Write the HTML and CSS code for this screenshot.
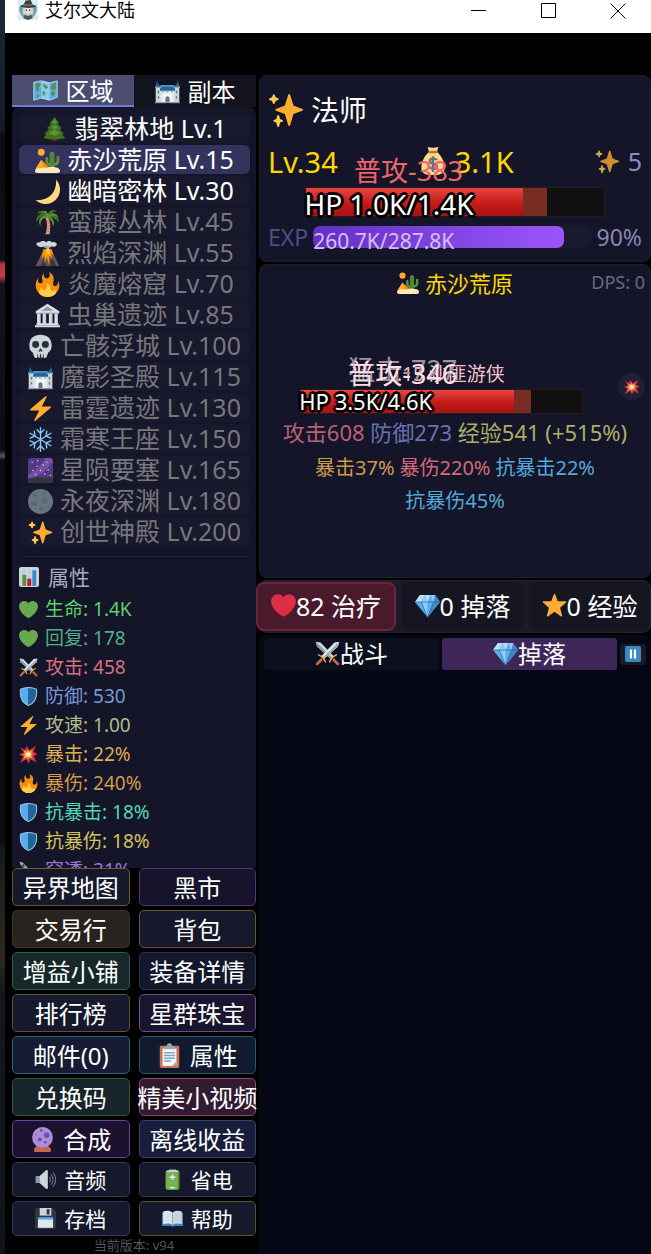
FILE: index.html
```html
<!DOCTYPE html>
<html lang="zh-CN">
<head>
    <meta charset="UTF-8">
    <meta name="viewport" content="width=device-width, initial-scale=1.0">
    <title>艾尔文大陆</title>
    <link rel="stylesheet" href="styles.css">
</head>
<body>
    <!-- icon sprite -->
    <svg class="sprite" aria-hidden="true">
        <symbol id="i-app" viewBox="0 0 36 36">
            <rect width="36" height="36" fill="#d9edf2"/>
            <path fill="#5f9fae" d="M2 13c5-6 27-6 32 0 0 11-5 18-16 22C7 31 2 24 2 13z"/>
            <path fill="#8aa1a8" d="M5 27l8-4h10l8 4-5 6-8 3-8-3z"/>
            <path fill="#cfd3d0" d="M9 12h18l1 12-5 5H13l-5-5z"/>
            <path fill="#f3ddcd" d="M12 14h12v6l-3 4h-6l-3-4z"/>
            <path fill="#36414a" d="M3 11c8 4 22 5 31 0l-8-3-3-8-9 1-4 7z"/>
            <path fill="#b58b44" d="M10 8l15 0 1 2-17 0z"/>
            <path fill="#27303a" d="M14 17h2v3h-2zM20 17h2v3h-2z"/>
            <path fill="#4d565d" d="M12 26l6 3 6-3 2 7-8 3-8-3z"/>
        </symbol>
        <symbol id="i-map" viewBox="0 0 36 36">
            <path fill="#5dadec" d="M1 6l11-2 12 3 11-3v24l-11 4-12-3-11 3z"/>
            <path fill="#8ccaf7" d="M12 4l12 3v25l-12-3z"/>
            <path fill="#5c913b" d="M3 9l6-2 2 3-3 3 1 4-3 3-2-5zM14 8l5 2 3 4-4 2-3-4zM27 9l6-2v8l-4 3-4-3zM26 21l4-2 2 4-5 4zM14 18l4 3-2 5-2-2zM5 24l4 1-3 4z"/>
            <path fill="none" stroke="#c6e5fa" d="M1 6l11-2 12 3 11-3v24l-11 4-12-3-11 3z"/>
        </symbol>
        <symbol id="i-castle" viewBox="0 0 36 36">
            <path fill="#ccd6dd" d="M1 12h8v22H1zM27 12h8v22h-8z"/>
            <path fill="#e1e8ed" d="M8 16h20v18H8z"/>
            <path fill="#226699" d="M0 12l2-6 1-5 1 5 5 6zM27 12l5-6 1-5 1 5 2 6zM8 9h20l1 8H7z"/>
            <path fill="#55acee" d="M8 9h20v2H8z"/>
            <path fill="#99aab5" d="M0 11h9v2H0zM27 11h9v2h-9zM10 17h3v2h-3zM16 17h3v2h-3zM23 17h3v2h-3z"/>
            <path fill="#f5f8fa" d="M12 21h12v13H12z"/>
            <path fill="#66757f" d="M15 34v-6c0-4 6-4 6 0v6zM4 17h2v4H4zM30 17h2v4h-2zM4 25h2v3H4zM30 25h2v3h-2z"/>
            <path fill="#8899a6" d="M0 33h15v2H0zM21 33h15v2H21z"/>
        </symbol>
        <symbol id="i-pine" viewBox="0 0 36 36">
            <path fill="#662113" d="M14 28h8v7h-8z"/>
            <path fill="#3e721d" d="M18 0c-2 3-4 6-7 8l2 1c-1 3-3 5-6 7l3 1c-2 3-4 5-7 7l3 1c-1 2-3 4-4 5 8 3 24 3 32 0-2-1-4-3-5-5l3-1c-3-2-5-4-6-7l3-1c-3-2-5-4-6-7l2-1c-3-2-5-5-7-8z"/>
            <path fill="#5c913b" d="M18 2l-4 6 4 2 4-2zM13 15l5 3 6-3-6-4zM9 23l9 4 9-4-9-5z"/>
        </symbol>
        <symbol id="i-desert" viewBox="0 0 36 36">
            <circle cx="9" cy="6" r="5" fill="#ffac33"/>
            <path fill="#f4900c" d="M1 30l8-13 14 13z"/>
            <path fill="#ffac33" d="M1 30l8-13 4 13z"/>
            <path fill="#5c913b" d="M21 30V9c0-5 7-5 7 0v21z"/>
            <path fill="none" stroke="#5c913b" stroke-width="4" stroke-linecap="round" d="M17 15v5q0 4 5 4M33 13v6q0 4-6 5"/>
            <path stroke="#3e721d" d="M23 8v21M26 8v21"/>
            <path fill="#ffe8b6" d="M0 33c0-3 4-5 9-4 5-2 8 0 10-1 5-2 9 0 11 0 4 0 6 3 6 5 0 3-4 3-8 3H7c-4 0-7 0-7-3z"/>
        </symbol>
        <symbol id="i-moon" viewBox="0 0 36 36">
            <path fill="#ffd983" d="M30.312.776C32 19 20 32 .776 30.312c8.199 7.717 21.091 7.588 29.107-.429C37.9 21.867 38.03 8.975 30.312.776z"/>
            <path fill="#ffcc4d" d="M30 15l2-2v4zM25 27l4-2-2 4zM17 31l4-1-2 3z"/>
        </symbol>
        <symbol id="i-palm" viewBox="0 0 36 36">
            <path fill="#d99e82" d="M18 9c4 6 5 15 3 26h-6c3-10 3-17 0-24z"/>
            <path fill="none" stroke="#c1694f" d="M17 15h4M18 19h4M17 23h5M17 27h5M16 31h5"/>
            <path fill="#3e721d" d="M18 11C12 7 5 9 2 19c-1-8 2-13 8-13-2-2-5-1-7 0 3-6 10-7 15 1 2-6 8-9 13-5-4 0-6 1-8 4 6-1 12 4 11 12-4-5-9-8-16-7z"/>
            <path fill="#5c913b" d="M18 11C11 11 7 15 8 24 3 16 7 8 16 8 15 3 11 2 9 3c4-4 9-2 10 4 5-4 12-3 15 4-5-4-10-3-13-1 6 2 8 8 5 14-1-7-3-10-8-13z"/>
        </symbol>
        <symbol id="i-volcano" viewBox="0 0 36 36">
            <path fill="#66565a" d="M1 36L13 11h10l12 25z"/>
            <path fill="#413438" d="M8 36l6-14 2 14zM22 36l1-14 8 14z"/>
            <path fill="#f4900c" d="M12 12h12l3 9-3-3 1 9-4-7-1 15-3-12-3 9-1-11-4 5z"/>
            <path fill="#ffcc4d" d="M17 8h3l2 14-4-6-3 8z"/>
            <path fill="#ccd6dd" d="M4 7C0 5 3 1 7 2c3-3 7-2 9 0 3-3 7-2 8 0 4-2 9 1 7 4-2 3-6 2-8 2-3 2-7 2-10 0-4 2-7 1-9-1z"/>
            <path fill="#99aab5" d="M9 7c3 2 5 1 8-1 2 2 5 3 9 1-3 4-6 2-9 3-4 0-6-1-8-3z"/>
        </symbol>
        <symbol id="i-fire" viewBox="0 0 36 36">
            <path fill="#f4900c" d="M35 19c0-2.062-.367-4.039-1.04-5.868-.46 5.389-3.333 8.157-6.335 6.868-2.812-1.208-.917-5.917-.777-8.164.236-3.809-.012-8.169-6.931-11.794 2.875 5.5.333 8.917-2.333 9.125-2.958.231-5.667-2.542-4.667-7.042-3.238 2.386-3.332 6.402-2.333 9 1.042 2.708-.042 4.958-2.583 5.208-2.84.28-4.418-3.041-2.963-8.333C2.52 10.965 1 14.805 1 19c0 9.389 7.611 17 17 17s17-7.611 17-17z"/>
            <path fill="#ffcc4d" d="M28.394 23.999c.148 3.084-2.561 4.293-4.019 3.709-2.106-.843-1.541-2.291-2.083-5.291s-2.625-5.083-5.708-6c2.25 6.333-1.247 8.667-3.08 9.084-1.872.426-3.753-.001-3.968-4.007C7.352 23.668 6 26.676 6 30c0 .368.023.73.055 1.09C9.125 34.124 13.342 36 18 36s8.875-1.876 11.945-4.91c.032-.36.055-.722.055-1.09 0-2.187-.584-4.236-1.606-6.001z"/>
        </symbol>
        <symbol id="i-temple" viewBox="0 0 36 36">
            <path fill="#d8e0e5" d="M1 12L18 1l17 11v3H1z"/>
            <path fill="#8899a6" d="M9 11l9-6 9 6zM3 14h30v1H3z"/>
            <path fill="#d8e0e5" d="M3 15h5v15H3zM11 15h5v15h-5zM20 15h5v15h-5zM28 15h5v15h-5zM2 29h32v3H2zM0 32h36v3H0z"/>
            <path fill="#99aab5" d="M7 15h1v14H7zM15 15h1v14h-1zM24 15h1v14h-1zM32 15h1v14h-1zM1 32h34v1H1z"/>
        </symbol>
        <symbol id="i-skull" viewBox="0 0 36 36">
            <path fill="#ccd6dd" d="M34 16C34 6 27 1 18 1S2 6 2 16c0 6 1 8 4 10 2 1 2 7 4 8 2 2 4-1 5-1 1 2 5 2 6 0 1 0 3 3 5 1 2-1 2-7 4-8 3-2 4-4 4-10z"/>
            <circle cx="11" cy="15" r="5" fill="#292f33"/>
            <circle cx="25" cy="15" r="5" fill="#292f33"/>
            <path fill="#292f33" d="M18 20l-3 5c1 1 2 0 3-1 1 1 2 2 3 1zM13 29h1v6h-1zM17 29h2v6h-2zM22 29h1v6h-1z"/>
        </symbol>
        <symbol id="i-zap" viewBox="0 0 36 36">
            <path fill="#ffac33" d="M32.938 15.651C32.792 15.26 32.418 15 32 15H19.925L26.89 1.458c.219-.426.106-.947-.271-1.243C26.437.071 26.218 0 26 0c-.233 0-.466.082-.653.243L18 6.588 3.347 19.243c-.316.273-.43.714-.284 1.105S3.582 21 4 21h12.075L9.11 34.542c-.219.426-.106.947.271 1.243.182.144.401.215.619.215.233 0 .466-.082.653-.243L18 29.412l14.653-12.655c.317-.273.43-.714.285-1.106z"/>
        </symbol>
        <symbol id="i-snow" viewBox="0 0 36 36">
            <g fill="none" stroke="#88c9f9" stroke-width="2" stroke-linecap="round">
                <path d="M18 1v34M3 9l30 18M33 9L3 27"/>
                <path d="M13 4l5 5 5-5M13 32l5-5 5 5M3 16l7-3-1-7M33 20l-7 3 1 7M33 16l-7-3 1-7M3 20l7 3-1 7"/>
            </g>
        </symbol>
        <symbol id="i-galaxy" viewBox="0 0 36 36">
            <rect width="36" height="36" rx="4" fill="#553986"/>
            <path fill="#7450a8" d="M0 24C10 20 20 10 25 0h8L36 4C28 18 14 28 0 30z"/>
            <path fill="#31373d" d="M0 30c10-3 24-3 36-1v3a4 4 0 0 1-4 4H4a4 4 0 0 1-4-4z"/>
            <g fill="#efe4fb"><circle cx="6" cy="6" r="1"/><circle cx="14" cy="4" r="1"/><circle cx="13" cy="12" r="1"/><circle cx="22" cy="10" r="1"/><circle cx="27" cy="6" r="1"/><circle cx="7" cy="18" r="1"/><circle cx="18" cy="18" r="1"/><circle cx="29" cy="17" r="1"/><circle cx="24" cy="23" r="1"/><circle cx="11" cy="24" r="1"/><circle cx="32" cy="25" r="1"/></g>
        </symbol>
        <symbol id="i-newmoon" viewBox="0 0 36 36">
            <circle cx="18" cy="18" r="18" fill="#66757f"/>
            <g fill="#5b6876"><circle cx="10" cy="9" r="3"/><circle cx="22" cy="7" r="2"/><circle cx="24" cy="17" r="4"/><circle cx="9" cy="21" r="4"/><circle cx="19" cy="28" r="3"/><circle cx="29" cy="26" r="2"/></g>
        </symbol>
        <symbol id="i-sparkles" viewBox="0 0 36 36">
            <path fill="#ffac33" d="M34.347 16.893l-8.899-3.294-3.323-10.891c-.128-.42-.517-.708-.956-.708-.439 0-.828.288-.956.708l-3.322 10.891-8.9 3.294c-.393.146-.653.519-.653.938 0 .418.26.793.653.938l8.895 3.293 3.324 11.223c.126.424.516.715.959.715.442 0 .833-.291.959-.716l3.324-11.223 8.896-3.293c.391-.144.652-.518.652-.937 0-.418-.261-.792-.653-.938z"/>
            <path fill="#ffcc4d" d="M14.347 27.894l-2.314-.856-.9-3.3c-.118-.436-.513-.738-.964-.738-.451 0-.846.302-.965.737l-.9 3.3-2.313.856c-.393.145-.653.52-.653.938 0 .418.26.793.653.938l2.301.853.907 3.622c.112.444.511.756.97.756.459 0 .858-.312.97-.757l.907-3.622 2.301-.853c.393-.144.653-.519.653-.937 0-.418-.26-.793-.653-.937zM10.009 6.231l-2.364-.875-.876-2.365c-.145-.393-.519-.653-.938-.653-.418 0-.792.26-.938.653l-.875 2.365-2.365.875c-.393.146-.653.52-.653.938 0 .418.26.793.653.938l2.365.875.875 2.365c.146.393.52.653.938.653.418 0 .792-.26.938-.653l.875-2.365 2.365-.875c.393-.146.653-.52.653-.938 0-.418-.26-.792-.653-.938z"/>
        </symbol>
        <symbol id="i-chart" viewBox="0 0 36 36">
            <rect width="36" height="36" rx="4" fill="#ccd6dd"/>
            <path stroke="#b4c1ca" d="M0 9h36M0 18h36M0 27h36M9 0v36M18 0v36M27 0v36"/>
            <path fill="#5c913b" d="M6 14h7v20H6z"/>
            <path fill="#be1931" d="M15 21h7v13h-7z"/>
            <path fill="#3b88c3" d="M24 6h7v28h-7z"/>
        </symbol>
        <symbol id="i-heart" viewBox="0 0 36 36">
            <path fill="currentColor" d="M35.885 11.833c0-5.45-4.418-9.868-9.867-9.868-3.308 0-6.227 1.633-8.018 4.129-1.791-2.496-4.71-4.129-8.017-4.129-5.45 0-9.868 4.417-9.868 9.868 0 .772.098 1.52.266 2.241C1.751 22.587 11.216 31.568 18 34.034c6.783-2.466 16.249-11.447 17.617-19.959.17-.721.268-1.469.268-2.242z"/>
        </symbol>
        <symbol id="i-swords" viewBox="0 0 36 36">
            <path fill="#ccd6dd" d="M1 1l7 1 19 20-4 4L3 8z"/>
            <path fill="#8899a6" d="M1 1l24 23-2 2L3 8z"/>
            <path fill="#dde5ea" d="M35 1l-7 1L9 22l4 4L33 8z"/>
            <path fill="#99aab5" d="M35 1L11 24l2 2L33 8z"/>
            <path fill="none" stroke="#ffac33" stroke-width="2" stroke-linecap="round" d="M5 20q6 2 10 10M31 20q-6 2-10 10"/>
            <path stroke="#bf6952" stroke-width="4" stroke-linecap="round" d="M9 27l-6 6M27 27l6 6"/>
        </symbol>
        <symbol id="i-shield" viewBox="0 0 36 36">
            <path fill="#55acee" d="M18 1C12 1 7 2 3 4 1 19 5 30 18 35z"/>
            <path fill="#226699" d="M18 1c6 0 11 1 15 3 2 15-2 26-15 31z"/>
            <path fill="none" stroke="#99c6e6" stroke-width="2" d="M18 1c6 0 11 1 15 3 2 15-2 26-15 31C5 30 1 19 3 4c4-2 9-3 15-3z"/>
        </symbol>
        <symbol id="i-boom" viewBox="0 0 36 36">
            <path fill="#dd2e44" d="M2 4l9 5 4-7 4 8L32 2l-5 11 8 4-7 4 5 12-11-6-4 8-4-8-12 7 6-12-8-4 9-4z"/>
            <path fill="#ffac33" d="M9 10l6 3 2-5 3 5 6-4-3 7 5 1-5 3 3 6-6-3-3 5-2-5-7 4 3-7-5-2 5-2z"/>
            <path fill="#fff8e8" d="M17 12l2 3 4 0-2 3 1 4-4-1-4 2v-5l-2-2 4-1z"/>
        </symbol>
        <symbol id="i-dagger" viewBox="0 0 36 36">
            <path fill="#99aab5" d="M1 1l6 2 17 17-4 4L3 7z"/>
            <path fill="#292f33" d="M6 7l3-1 2 4-3 1zM13 14l3-1 2 4-3 1z"/>
            <path stroke="#ccd6dd" stroke-width="4" d="M17 27l10-10M24 24l9 9"/>
        </symbol>
        <symbol id="i-clip" viewBox="0 0 36 36">
            <rect x="4" y="4" width="28" height="32" rx="2" fill="#d4704f"/>
            <path fill="#f5f8fa" d="M8 8h20v25H8z"/>
            <path fill="#99aab5" d="M10 9V5h4c0-6 8-6 8 0h4v4z"/>
            <path stroke="#7fa5be" stroke-width="2" d="M10 14h16M10 18h16M10 22h16M10 26h10"/>
            <path fill="#99aab5" d="M22 33l6-7v7z"/>
        </symbol>
        <symbol id="i-orb" viewBox="0 0 36 36">
            <path fill="#bf6952" d="M6 31l4-4h16l4 4v5H6z"/>
            <circle cx="18" cy="15" r="15" fill="#aa8dd8"/>
            <g fill="#744eaa"><circle cx="24" cy="12" r="4"/><circle cx="14" cy="18" r="3"/><circle cx="22" cy="22" r="2"/><circle cx="16" cy="5" r="2"/><circle cx="9" cy="11" r="1"/></g>
        </symbol>
        <symbol id="i-speaker" viewBox="0 0 36 36">
            <path fill="#8899a6" d="M1 12h8v12H1z"/>
            <path fill="#ccd6dd" d="M8 12L19 2c2-1 3 0 3 2v28c0 2-1 3-3 2L8 24z"/>
            <path fill="none" stroke="#66757f" stroke-width="2" stroke-linecap="round" d="M25 14q3 4 0 8M28 10q6 8 0 16M31 6q9 12 0 24"/>
        </symbol>
        <symbol id="i-battery" viewBox="0 0 36 36">
            <path fill="#ccd6dd" d="M12 1h12v4H12z"/>
            <rect x="6" y="2" width="24" height="34" rx="4" fill="#5c913b"/>
            <rect x="7" y="3" width="20" height="32" rx="3" fill="#77b255"/>
            <path fill="#fff" d="M17 9h2v4h4v2h-4v4h-2v-4h-4v-2h4zM14 31h8v2h-8z"/>
            <path fill="#ccd6dd" d="M8 3q10-3 20 0v2H8z"/>
        </symbol>
        <symbol id="i-disk" viewBox="0 0 36 36">
            <path fill="#31373d" d="M0 3a3 3 0 0 1 3-3h27l6 6v27a3 3 0 0 1-3 3H3a3 3 0 0 1-3-3z"/>
            <path fill="#ccd6dd" d="M8 0h20v13H8z"/>
            <path fill="#31373d" d="M20 2h5v9h-5z"/>
            <path fill="#e1e8ed" d="M5 17h26v17H5z"/>
            <path fill="#5dadec" d="M5 16h26v4H5z"/>
        </symbol>
        <symbol id="i-book" viewBox="0 0 36 36">
            <path fill="#3b88c3" d="M0 8h36v23H20l-2 2-2-2H0z"/>
            <path fill="#e1e8ed" d="M2 6c6-2 12-2 16 2v21c-5-3-10-3-16-1z"/>
            <path fill="#ccd6dd" d="M34 6c-6-2-12-2-16 2v21c5-3 10-3 16-1z"/>
            <path stroke="#99aab5" stroke-width="2" d="M18 8v22"/>
            <path fill="none" stroke="#b4c4d0" d="M5 11q6-1 10 1M5 16q6-1 10 1M5 21q6-1 10 1M31 11q-6-1-10 1M31 16q-6-1-10 1M31 21q-6-1-10 1"/>
        </symbol>
        <symbol id="i-bag" viewBox="0 0 36 36">
            <path fill="#fdd888" d="M11 0q7 2 14 0l-2 6c5 4 10 12 10 21 0 7-5 9-15 9S3 34 3 27C3 18 8 10 13 6z"/>
            <path fill="#bf6952" d="M12 5h12v3H12z"/>
            <path fill="none" stroke="#67757f" stroke-width="3" d="M23 17c-2-3-9-3-9 1 0 5 9 2 9 7 0 4-8 4-10 0M18 12v20"/>
        </symbol>
        <symbol id="i-gem" viewBox="0 0 36 36">
            <path fill="#5dadec" d="M7 3h22l7 10-18 22L0 13z"/>
            <path fill="#bdddf4" d="M7 3h7l-5 10H0zM14 3h8l-4 10z"/>
            <path fill="#8ccaf7" d="M14 3l4 10H9zM22 3h7l-2 10z"/>
            <path fill="#4289c1" d="M27 13h9L18 35zM29 3l7 10h-9z"/>
            <path fill="#8ccaf7" d="M9 13h9v22z"/>
            <path fill="none" stroke="#226699" stroke-width="1" d="M0 13h36M9 13l9 22 9-22"/>
        </symbol>
        <symbol id="i-star" viewBox="0 0 36 36">
            <path fill="#ffac33" stroke="#ffac33" stroke-width="2" stroke-linejoin="round" d="M18 2l4 11 12 0-9 8 3 12-10-7-10 7 3-12-9-8 12 0z"/>
        </symbol>
        <symbol id="i-pause" viewBox="0 0 36 36">
            <rect width="36" height="36" rx="4" fill="#3b88c3"/>
            <path fill="#fff" d="M11 8h5v20h-5zM20 8h5v20h-5z"/>
        </symbol>
    </svg>

    <div class="backdrop"></div>

    <div class="window">
        <header class="titlebar">
            <svg class="app-icon"><use href="#i-app"/></svg>
            <span class="app-title">艾尔文大陆</span>
            <button class="win-btn" aria-label="最小化"><svg viewBox="0 0 16 16"><path d="M0 7.5h15"/></svg></button>
            <button class="win-btn" aria-label="最大化"><svg viewBox="0 0 16 16"><path d="M.5.5h14v14H.5z"/></svg></button>
            <button class="win-btn" aria-label="关闭"><svg viewBox="0 0 16 16"><path d="M.5.5l15 15M15.5.5l-15 15"/></svg></button>
        </header>

        <main class="game">
            <aside class="left">
                <div class="tabs">
                    <button class="tab active"><svg class="icon"><use href="#i-map"/></svg>区域</button>
                    <button class="tab"><svg class="icon"><use href="#i-castle"/></svg>副本</button>
                </div>

                <div class="panel">
                    <div class="zones">
                        <button class="zone"><svg class="icon"><use href="#i-pine"/></svg>翡翠林地 Lv.1</button>
                        <button class="zone current"><svg class="icon"><use href="#i-desert"/></svg>赤沙荒原 Lv.15</button>
                        <button class="zone"><svg class="icon"><use href="#i-moon"/></svg>幽暗密林 Lv.30</button>
                        <button class="zone locked"><svg class="icon"><use href="#i-palm"/></svg>蛮藤丛林 Lv.45</button>
                        <button class="zone locked"><svg class="icon"><use href="#i-volcano"/></svg>烈焰深渊 Lv.55</button>
                        <button class="zone locked"><svg class="icon"><use href="#i-fire"/></svg>炎魔熔窟 Lv.70</button>
                        <button class="zone locked"><svg class="icon"><use href="#i-temple"/></svg>虫巢遗迹 Lv.85</button>
                        <button class="zone locked"><svg class="icon"><use href="#i-skull"/></svg>亡骸浮城 Lv.100</button>
                        <button class="zone locked"><svg class="icon"><use href="#i-castle"/></svg>魔影圣殿 Lv.115</button>
                        <button class="zone locked"><svg class="icon"><use href="#i-zap"/></svg>雷霆遗迹 Lv.130</button>
                        <button class="zone locked"><svg class="icon"><use href="#i-snow"/></svg>霜寒王座 Lv.150</button>
                        <button class="zone locked"><svg class="icon"><use href="#i-galaxy"/></svg>星陨要塞 Lv.165</button>
                        <button class="zone locked"><svg class="icon"><use href="#i-newmoon"/></svg>永夜深渊 Lv.180</button>
                        <button class="zone locked"><svg class="icon"><use href="#i-sparkles"/></svg>创世神殿 Lv.200</button>
                    </div>

                    <section class="stats">
                        <h2 class="stats-title"><svg class="icon"><use href="#i-chart"/></svg>属性</h2>
                        <ul class="stat-list">
                            <li class="stat green"><svg class="icon leaf"><use href="#i-heart"/></svg>生命: 1.4K</li>
                            <li class="stat teal"><svg class="icon leaf"><use href="#i-heart"/></svg>回复: 178</li>
                            <li class="stat rose"><svg class="icon"><use href="#i-swords"/></svg>攻击: 458</li>
                            <li class="stat blue"><svg class="icon"><use href="#i-shield"/></svg>防御: 530</li>
                            <li class="stat olive"><svg class="icon"><use href="#i-zap"/></svg>攻速: 1.00</li>
                            <li class="stat amber"><svg class="icon"><use href="#i-boom"/></svg>暴击: 22%</li>
                            <li class="stat orange"><svg class="icon"><use href="#i-fire"/></svg>暴伤: 240%</li>
                            <li class="stat mint"><svg class="icon"><use href="#i-shield"/></svg>抗暴击: 18%</li>
                            <li class="stat yellow"><svg class="icon"><use href="#i-shield"/></svg>抗暴伤: 18%</li>
                            <li class="stat violet"><svg class="icon"><use href="#i-dagger"/></svg>穿透: 31%</li>
                        </ul>
                    </section>
                </div>

                <nav class="menu">
                    <button class="menu-btn bronze">异界地图</button>
                    <button class="menu-btn purple">黑市</button>
                    <button class="menu-btn brown">交易行</button>
                    <button class="menu-btn gold">背包</button>
                    <button class="menu-btn forest">增益小铺</button>
                    <button class="menu-btn navy">装备详情</button>
                    <button class="menu-btn khaki">排行榜</button>
                    <button class="menu-btn lilac">星群珠宝</button>
                    <button class="menu-btn sky">邮件(0)</button>
                    <button class="menu-btn cyan"><svg class="icon"><use href="#i-clip"/></svg>属性</button>
                    <button class="menu-btn leafy">兑换码</button>
                    <button class="menu-btn pink">精美小视频</button>
                    <button class="menu-btn magic"><svg class="icon"><use href="#i-orb"/></svg>合成</button>
                    <button class="menu-btn indigo">离线收益</button>
                    <button class="menu-btn small"><svg class="icon"><use href="#i-speaker"/></svg>音频</button>
                    <button class="menu-btn small"><svg class="icon"><use href="#i-battery"/></svg>省电</button>
                    <button class="menu-btn small"><svg class="icon"><use href="#i-disk"/></svg>存档</button>
                    <button class="menu-btn small khaki"><svg class="icon"><use href="#i-book"/></svg>帮助</button>
                </nav>
                <footer class="version">当前版本: v94</footer>
            </aside>

            <div class="right">
                <section class="card hero">
                    <h1 class="hero-name"><svg class="icon"><use href="#i-sparkles"/></svg>法师</h1>
                    <div class="hero-info">
                        <span class="gold-text">Lv.34</span>
                        <span class="coins gold-text"><svg class="icon"><use href="#i-bag"/></svg>3.1K</span>
                        <span class="shards"><svg class="icon"><use href="#i-sparkles"/></svg>5</span>
                        <span class="float float-hit">普攻-383</span>
                    </div>
                    <div class="hp">
                        <div class="hp-ghost" style="width: 81%"></div>
                        <div class="hp-fill" style="width: 73%"></div>
                        <span class="hp-text">HP 1.0K/1.4K</span>
                    </div>
                    <div class="exp">
                        <span class="exp-label">EXP</span>
                        <div class="exp-bar">
                            <div class="exp-fill" style="width: 90%"></div>
                            <span class="exp-text">260.7K/287.8K</span>
                        </div>
                        <span class="exp-pct">90%</span>
                    </div>
                </section>

                <section class="card battle">
                    <div class="battle-head">
                        <h2 class="battle-zone gold-text"><svg class="icon"><use href="#i-desert"/></svg>赤沙荒原</h2>
                        <span class="dps">DPS: 0</span>
                    </div>
                    <div class="enemy">
                        <div class="enemy-name">Lv.15 沙匪游侠
                            <span class="float float-old">猛击-727</span>
                            <span class="float float-new">普攻-346</span>
                        </div>
                        <div class="hp hp-enemy">
                            <div class="hp-ghost" style="width: 82%"></div>
                            <div class="hp-fill" style="width: 76%"></div>
                            <span class="hp-text">HP 3.5K/4.6K</span>
                        </div>
                        <button class="skill" aria-label="技能"><svg class="icon"><use href="#i-boom"/></svg></button>
                    </div>
                    <p class="enemy-stats"><span class="e-atk">攻击608</span> <span class="e-def">防御273</span> <span class="e-exp">经验541 (+515%)</span></p>
                    <p class="enemy-stats extra"><span class="e-crit">暴击37%</span><span class="e-dmg">暴伤220%</span><span class="e-res">抗暴击22%</span><span class="e-res">抗暴伤45%</span></p>
                </section>

                <div class="buffs">
                    <button class="buff on"><svg class="icon"><use href="#i-heart"/></svg>82 治疗</button>
                    <button class="buff"><svg class="icon"><use href="#i-gem"/></svg>0 掉落</button>
                    <button class="buff"><svg class="icon"><use href="#i-star"/></svg>0 经验</button>
                </div>

                <section class="log">
                    <div class="log-tabs">
                        <button class="log-tab"><svg class="icon"><use href="#i-swords"/></svg>战斗</button>
                        <button class="log-tab active"><svg class="icon"><use href="#i-gem"/></svg>掉落</button>
                        <button class="log-pause" aria-label="暂停"><svg class="icon"><use href="#i-pause"/></svg></button>
                    </div>
                </section>
            </div>
        </main>
    </div>
</body>
</html>
```

FILE: styles.css
```css
* {
    box-sizing: border-box;
    margin: 0;
    padding: 0;
}
body {
    display: flex;
    height: 100vh;
    overflow: hidden;
    background: #000;
    color: #fff;
    font-family: "Noto Sans", "Noto Sans CJK SC", sans-serif;
    font-size: 24px;
}
button {
    font: inherit;
    color: inherit;
    border: none;
    background: none;
    cursor: pointer;
    white-space: nowrap;
    display: flex;
    align-items: center;
    justify-content: center;
    padding-bottom: 2px;
}
.sprite {
    position: absolute;
    width: 0;
    height: 0;
}
.icon {
    width: 25px;
    height: 25px;
    margin-top: 2px;
    flex: none;
}

/* desktop behind the window */
.backdrop {
    flex: 0 0 5px;
    background: linear-gradient(#1d2737 0, #141a25 130px, #0c0d14 135px, #0f0e16 260px, #b5304a 264px, #c03a52 276px, #14121a 284px, #0c0c14 450px, #55575c 456px, #0d0d16 460px, #0d0d14 840px, #14181f 850px, #1e1f1d 880px, #2a2a20 960px, #15171e 992px, #10131a);
}
.window {
    flex: 1;
    min-width: 0;
    display: flex;
    flex-direction: column;
}
.titlebar {
    display: flex;
    align-items: flex-start;
    height: 33px;
    background: #fff;
    color: #000;
}
.app-icon {
    width: 24px;
    height: 20px;
    margin: 0 5px 0 11px;
}
.app-title {
    flex: 1;
    font-size: 18px;
    line-height: 20px;
}
.win-btn {
    width: 70px;
    height: 22px;
    padding: 0;
}
.win-btn:last-child {
    width: 67px;
}
.win-btn svg {
    width: 16px;
    height: 16px;
    fill: none;
    stroke: #000;
}

.game {
    flex: 1;
    min-height: 0;
    display: grid;
    grid-template-columns: minmax(0, 61fr) minmax(0, 98fr);
    gap: 3px;
    padding: 42px 0 0 7px;
}
.left {
    display: flex;
    flex-direction: column;
    min-height: 0;
}
.tabs {
    display: flex;
}
.tab {
    flex: 1;
    gap: 8px;
    height: 32px;
    font-size: 24px;
    background: #13131e;
}
.tab.active {
    background: #4b4c70;
    border-bottom: 2px solid #6c7fd8;
}
.panel {
    flex: 1;
    min-height: 0;
    overflow: hidden;
    padding: 7px 6px 0 7px;
    background: #141528;
    border-radius: 8px 8px 0 0;
}
.zones {
    display: flex;
    flex-direction: column;
    gap: 2px;
    padding-bottom: 10px;
    border-bottom: 1px solid #202138;
}
.zone {
    gap: 7px;
    height: 29px;
    padding-bottom: 3px;
    font-size: 25px;
    background: #18192c;
    border-radius: 6px;
}
.zone .icon {
    margin-top: 4px;
}
.zone.current {
    background: #33335e;
}
.zone.locked {
    color: #77777c;
}
.stats-title {
    display: flex;
    align-items: center;
    gap: 9px;
    height: 37px;
    font-size: 21px;
    font-weight: normal;
    color: #a9abc0;
}
.stats-title .icon {
    width: 20px;
    height: 20px;
}
.stat-list {
    list-style: none;
}
.stat {
    display: flex;
    align-items: center;
    gap: 7px;
    height: 29px;
    padding-bottom: 2px;
    font-size: 19px;
}
.stat .icon {
    width: 19px;
    height: 19px;
    margin-top: 4px;
}
.stat .leaf { color: #6aa84f; }
.green { color: #5fd067; }
.teal { color: #4fae87; }
.rose { color: #d6707f; }
.blue { color: #7498d8; }
.olive { color: #b0bb85; }
.amber { color: #dcae55; }
.orange { color: #d39a4c; }
.mint { color: #58d6b0; }
.yellow { color: #d5c35c; }
.violet { color: #9d78d0; }

.menu {
    display: grid;
    grid-template-columns: 1fr 1fr;
    gap: 4px 9px;
}
.menu-btn {
    min-width: 0;
    gap: 8px;
    height: 38px;
    font-size: 24px;
    background: #16182c;
    border: 1px solid #34395c;
    border-radius: 5px;
}
.menu-btn.small {
    height: 35px;
    font-size: 21px;
}
.menu-btn.small .icon {
    width: 21px;
    height: 21px;
}
.menu-btn.bronze { border-color: #79522f; }
.menu-btn.purple { background: #15142a; border-color: #55307c; }
.menu-btn.brown { background: #29231f; border-color: #3b302b; }
.menu-btn.gold { border-color: #6b5632; }
.menu-btn.forest { background: #17272a; border-color: #2b5d4c; }
.menu-btn.navy { background: #14162b; border-color: #2b2e4e; }
.menu-btn.khaki { border-color: #5d5333; }
.menu-btn.lilac { background: #1a152e; border-color: #6c4c8a; }
.menu-btn.sky { background: #171b33; border-color: #315f80; }
.menu-btn.cyan { background: #111b30; border-color: #225a6c; }
.menu-btn.leafy { background: #17242a; border-color: #2d5a39; }
.menu-btn.pink { background: #321a30; border-color: #93466c; }
.menu-btn.magic { background: #1b122f; border-color: #62479a; }
.menu-btn.indigo { background: #181d39; border-color: #35426f; }
.version {
    height: 18px;
    font-size: 13px;
    line-height: 18px;
    text-align: center;
    color: #55565e;
}

.right {
    display: grid;
    grid-template-columns: minmax(0, 1fr);
    grid-template-rows: auto 33fr auto 65fr;
    gap: 2px;
    min-height: 0;
}
.card {
    background: #141528;
    border: 1px solid #1c1d2e;
    border-radius: 8px;
}
.gold-text {
    color: #ffd700;
}
.hero {
    padding: 7px 8px 8px;
}
.hero-name {
    display: flex;
    align-items: center;
    gap: 7px;
    height: 52px;
    font-size: 28px;
    font-weight: normal;
}
.hero-name .icon {
    width: 36px;
    height: 36px;
}
.hero-info {
    position: relative;
    display: flex;
    align-items: center;
    justify-content: space-between;
    height: 52px;
    font-size: 29px;
}
.coins,
.shards {
    display: flex;
    align-items: center;
    gap: 8px;
}
.coins .icon {
    width: 28px;
    height: 28px;
    margin-top: 0;
}
.shards {
    font-size: 25px;
    color: #9488c4;
}
.shards .icon {
    margin-top: 0;
    opacity: 0.8;
}
.float {
    position: absolute;
    font-size: 27px;
    line-height: 30px;
    white-space: nowrap;
}
.float-hit {
    left: 86px;
    top: 21px;
    color: #f0646c;
}
.hp {
    position: relative;
    width: 80%;
    height: 30px;
    margin: 0 auto;
    background: #120f10;
    border: 1px solid #2b1820;
}
.hp-ghost,
.hp-fill {
    position: absolute;
    left: 0;
    top: 0;
    height: 100%;
    background: #782d22;
}
.hp-fill {
    background: linear-gradient(#e8473f, #c41a18 55%, #a61412);
}
.hp-text {
    position: absolute;
    left: -2px;
    top: 0;
    font-size: 28px;
    line-height: 32px;
    white-space: nowrap;
    text-shadow: 3px 0 #000, -3px 0 #000, 0 3px #000, 0 -3px #000, 2px 2px #000, -2px -2px #000, 2px -2px #000, -2px 2px #000;
}
.exp {
    display: flex;
    align-items: center;
    gap: 5px;
    height: 32px;
    margin-top: 4px;
    font-size: 23px;
}
.exp-label {
    color: #524b88;
}
.exp-bar {
    position: relative;
    flex: 1;
    height: 22px;
    background: #181a30;
    border-radius: 7px;
}
.exp-fill {
    height: 100%;
    background: linear-gradient(90deg, #6430c4, #9b55fb);
    border-radius: 7px;
}
.exp-text {
    position: absolute;
    left: 0;
    top: 4px;
    font-size: 21px;
    line-height: 22px;
    color: #d5c0f5;
}
.exp-pct {
    color: #8b82b2;
}

.battle {
    padding: 1px 5px;
}
.battle-head {
    display: grid;
    grid-template-columns: 1fr auto 1fr;
    align-items: center;
    height: 30px;
}
.battle-zone {
    grid-column: 2;
    display: flex;
    align-items: center;
    gap: 6px;
    font-size: 22px;
    font-weight: normal;
}
.battle-zone .icon {
    width: 22px;
    height: 22px;
}
.dps {
    justify-self: end;
    font-size: 18px;
    color: #6b6b7e;
}
.enemy {
    display: grid;
    grid-template-columns: 1fr auto;
    align-items: center;
    padding-top: 63px;
}
.enemy-name {
    position: relative;
    justify-self: center;
    font-size: 19px;
    line-height: 30px;
    color: #f3c3cd;
}
.float-old {
    left: -30px;
    top: -4px;
    color: #9d94a2;
}
.float-new {
    left: -30px;
    top: 0;
    color: #ffdfe4;
}
.skill {
    grid-column: 2;
    grid-row: 1 / 3;
    width: 27px;
    height: 27px;
    background: #1f2035;
    border-radius: 50%;
}
.skill .icon {
    width: 16px;
    height: 16px;
}
.hp-enemy {
    height: 25px;
    width: 80%;
}
.hp-enemy .hp-text {
    font-size: 22px;
    line-height: 22px;
}
.enemy-stats {
    font-size: 22px;
    line-height: 33px;
    text-align: center;
    padding: 2px 0;
    white-space: nowrap;
}
.enemy-stats.extra {
    display: flex;
    flex-wrap: wrap;
    justify-content: center;
    gap: 0 5px;
    padding: 0 30px;
    font-size: 20px;
}
.e-atk { color: #bd6077; }
.e-def { color: #6872b2; }
.e-exp { color: #adae6a; }
.e-crit { color: #d19a51; }
.e-dmg { color: #d46a79; }
.e-res { color: #55a8d8; }

.buffs {
    display: grid;
    grid-template-columns: 136px 1fr 1fr;
    gap: 6px;
    padding: 1px 0;
    background: #1a1a28;
    border: 1px solid #222230;
    border-radius: 8px;
}
.buff {
    height: 49px;
    padding-bottom: 4px;
    font-size: 25px;
    background: #161622;
    border-radius: 8px;
}
.buff.on {
    margin-left: -4px;
    background: #481a2c;
    border: 2px solid #6b243d;
}
.buff.on .icon {
    color: #dd2e44;
}
.log {
    background: #050814;
    border-radius: 8px 8px 0 0;
    padding: 3px 5px;
}
.log-tabs {
    display: flex;
    align-items: center;
    gap: 3px;
}
.log-tab {
    flex: 1;
    height: 32px;
    padding-bottom: 4px;
    font-size: 24px;
    background: #0d0f1e;
    border-radius: 3px;
}
.log-tab.active {
    background: #3e2658;
}
.log-pause {
    width: 26px;
    height: 21px;
    background: #181a26;
    border-radius: 4px;
}
.log-pause .icon {
    width: 16px;
    height: 16px;
}
```
